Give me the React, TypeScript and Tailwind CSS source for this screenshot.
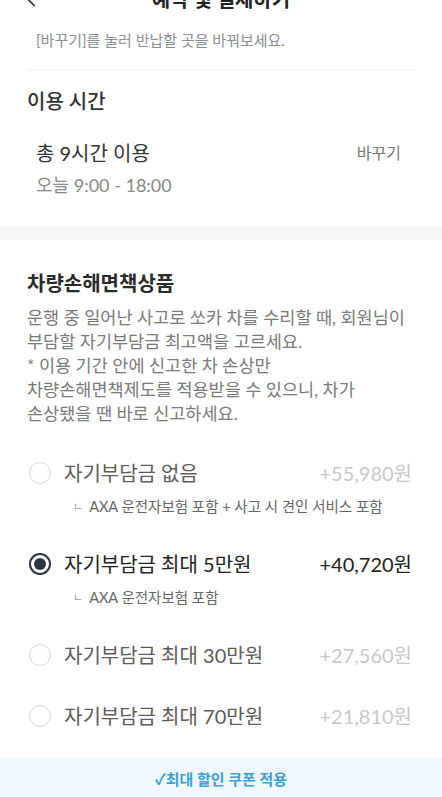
import { ChevronLeft } from "lucide-react";

const font = { fontFamily: '"Lato", "Noto Sans CJK KR", "Noto Sans", sans-serif' };

interface Option {
  label: string;
  price: string;
  note?: string;
  selected?: boolean;
}

const options: Option[] = [
  { label: "자기부담금 없음", price: "+55,980원", note: "AXA 운전자보험 포함 + 사고 시 견인 서비스 포함" },
  { label: "자기부담금 최대 5만원", price: "+40,720원", note: "AXA 운전자보험 포함", selected: true },
  { label: "자기부담금 최대 30만원", price: "+27,560원" },
  { label: "자기부담금 최대 70만원", price: "+21,810원" },
];

function Radio({ on }: { on?: boolean }) {
  if (on) {
    return (
      <span className="flex h-[22px] w-[22px] shrink-0 items-center justify-center rounded-full border-2 border-[#2c3440]">
        <span className="h-[12px] w-[12px] rounded-full bg-[#2c3440]" />
      </span>
    );
  }
  return <span className="h-[22px] w-[22px] shrink-0 rounded-full border-[1.5px] border-[#d6d6d6]" />;
}

export default function App() {
  return (
    <div className="h-[797px] w-[442px] overflow-hidden bg-white" style={font}>
      <div className="-mt-[21px] relative flex h-[40px] items-center justify-center">
        <ChevronLeft className="absolute left-[18px] h-[26px] w-[26px] text-[#333]" strokeWidth={1.6} />
        <h1 className="text-[20px] font-bold text-[#222]">예약 및 결제하기</h1>
      </div>

      <p className="pl-[36px] pt-[11px] text-[15px] leading-[20px] text-[#8b8f95]">
        [바꾸기]를 눌러 반납할 곳을 바꿔보세요.
      </p>
      <div className="mx-[27px] mt-[19px] h-px bg-[#eeeeee]" />

      <section className="px-[27px] pb-[30px] pt-[18px]">
        <h2 className="text-[20px] font-medium leading-[26px] text-[#333]">이용 시간</h2>
        <div className="mt-[27px] flex items-center justify-between pl-[9px] pr-[14px]">
          <span className="text-[20px] leading-[24px] text-[#333]">총 9시간 이용</span>
          <button className="text-[16px] leading-[24px] text-[#777]">바꾸기</button>
        </div>
        <p className="mt-[9px] pl-[9px] text-[18px] leading-[22px] text-[#888]">오늘 9:00 - 18:00</p>
      </section>

      <div className="h-[14px] bg-[#f5f6f8]" />

      <section className="pt-[30px]">
        <h2 className="px-[27px] text-[20px] font-bold leading-[26px] text-[#2a2a2a]">차량손해면책상품</h2>
        <p className="mt-[10px] whitespace-nowrap px-[27px] text-[17.5px] leading-[24px] text-[#7a7a7a]">
          운행 중 일어난 사고로 쏘카 차를 수리할 때, 회원님이
          <br />
          부담할 자기부담금 최고액을 고르세요.
          <br />* 이용 기간 안에 신고한 차 손상만
          <br />
          차량손해면책제도를 적용받을 수 있으니, 차가
          <br />
          손상됐을 땐 바로 신고하세요.
        </p>

        <ul className="mt-[16px]">
          {options.map((o) => (
            <li key={o.label} className="pb-[16px] pl-[29px] pr-[30px] pt-[17px]">
              <div className="flex h-[28px] items-center">
                <Radio on={o.selected} />
                <span className={`ml-[13px] flex-1 text-[20px] ${o.selected ? "text-[#222]" : "text-[#5c5c5c]"}`}>
                  {o.label}
                </span>
                <span className={`text-[20px] ${o.selected ? "text-[#222]" : "text-[#c9c9c9]"}`}>{o.price}</span>
              </div>
              {o.note && (
                <div className="mt-[10px] flex h-[20px] items-center pl-[44px] text-[14.5px] text-[#666]">
                  <span className="mr-[6px] text-[11px] text-[#999]">ㄴ</span>
                  {o.note}
                </div>
              )}
            </li>
          ))}
        </ul>
      </section>

      <div className="mt-[12px] flex h-[42px] items-center justify-center bg-[#eef8fd] text-[15px] font-bold text-[#3aa0d8]">
        ✓최대 할인 쿠폰 적용
      </div>
    </div>
  );
}
